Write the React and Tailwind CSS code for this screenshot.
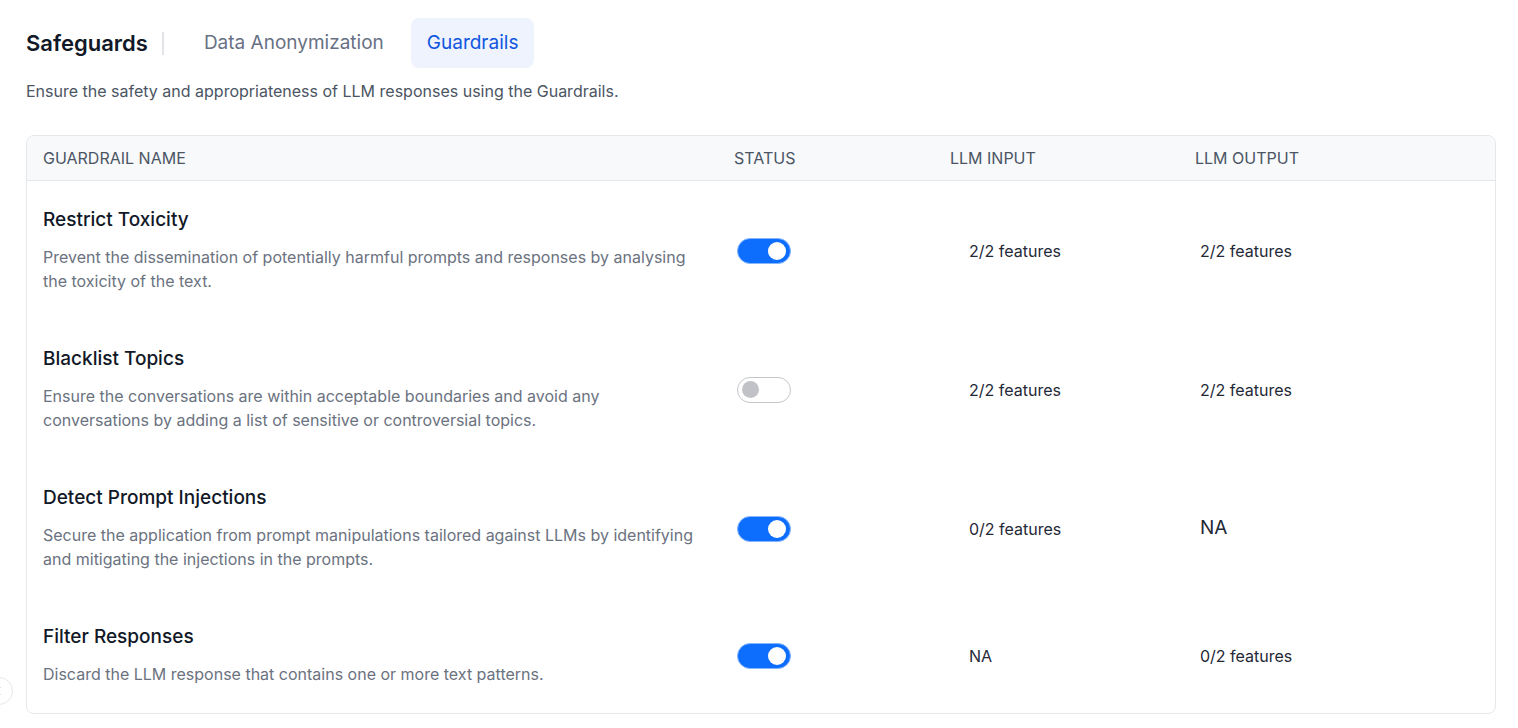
import React, { useState } from 'react';

const guardrails = [
  {
    id: 1,
    name: 'Restrict Toxicity',
    description:
      'Prevent the dissemination of potentially harmful prompts and responses by analysing the toxicity of the text.',
    enabled: true,
    input: '2/2 features',
    output: '2/2 features',
  },
  {
    id: 2,
    name: 'Blacklist Topics',
    description:
      'Ensure the conversations are within acceptable boundaries and avoid any conversations by adding a list of sensitive or controversial topics.',
    enabled: false,
    input: '2/2 features',
    output: '2/2 features',
  },
  {
    id: 3,
    name: 'Detect Prompt Injections',
    description:
      'Secure the application from prompt manipulations tailored against LLMs by identifying and mitigating the injections in the prompts.',
    enabled: true,
    input: '0/2 features',
    output: 'NA',
  },
  {
    id: 4,
    name: 'Filter Responses',
    description: 'Discard the LLM response that contains one or more text patterns.',
    enabled: true,
    input: 'NA',
    output: '0/2 features',
  },
];

function Toggle({ checked, onChange }) {
  return (
    <button
      type="button"
      onClick={onChange}
      className={
        checked
          ? 'flex h-[26px] w-[54px] items-center justify-end rounded-full border border-[#86b7fe] bg-[#0d6efd] px-[4px]'
          : 'flex h-[26px] w-[54px] items-center justify-start rounded-full border border-[#c4c6cb] bg-white px-[4px]'
      }
    >
      {checked ? (
        <span className="h-[18px] w-[18px] rounded-full bg-white" />
      ) : (
        <span className="h-[17px] w-[17px] rounded-full bg-[#c0c2c7]" />
      )}
    </button>
  );
}

function Cell({ value, big }) {
  return (
    <span className={big ? 'text-[19px] text-[#1f2937]' : 'text-[16px] text-[#1f2937]'}>
      {value}
    </span>
  );
}

export default function App() {
  const [rows, setRows] = useState(guardrails);

  const handleToggle = (id) => {
    setRows(prev => prev.map(r => (r.id === id ? { ...r, enabled: !r.enabled } : r)));
  };

  return (
    <div className="relative min-h-[728px] bg-white font-['Inter','Liberation_Sans',sans-serif]">
      <div className="pl-[26px] pr-[22px] pt-[17px]">
        {/* tabs */}
        <div className="flex items-center">
          <h1 className="text-[22px] font-semibold text-[#111827]">Safeguards</h1>
          <div className="ml-[14px] h-[23px] w-[2px] bg-[#e2e4e8]" />
          <button className="ml-[25px] px-[15px] py-[12px] text-[19px] text-[#687184]">Data Anonymization</button>
          <button className="ml-[12px] h-[50px] rounded-lg bg-[#eef3fe] px-[16px] text-[19px] text-[#0f56e0]">
            Guardrails
          </button>
        </div>

        <p className="mt-[9px] text-[16px] text-[#4b5563]">
          Ensure the safety and appropriateness of LLM responses using the Guardrails.
        </p>

        {/* table */}
        <div className="mt-[32px] overflow-hidden rounded-lg border border-[#e5e7eb]">
          <div className="grid h-[45px] grid-cols-[691px_216px_245px_1fr] items-center border-b border-[#e5e7eb] bg-[#f8f9fb] text-[16px] uppercase text-[#4b5563]">
            <div className="px-4">Guardrail Name</div>
            <div className="px-4">Status</div>
            <div className="px-4">LLM Input</div>
            <div className="px-4">LLM Output</div>
          </div>

          {rows.map(row => (
            <div key={row.id} className="grid grid-cols-[691px_216px_245px_1fr] items-center pb-[27px] pt-[25px]">
              <div className="px-4">
                <div className="text-[19px] font-medium leading-[28px] text-[#111827]">{row.name}</div>
                <p className="mt-[11px] text-[16px] leading-[24px] text-[#6b7280]">{row.description}</p>
              </div>
              <div className="px-4 pl-[19px] pt-[3px]">
                <Toggle checked={row.enabled} onChange={() => handleToggle(row.id)} />
              </div>
              <div className="pl-[35px] pt-[3px]">
                <Cell value={row.input} />
              </div>
              <div className="pl-[21px] pt-[3px]">
                <Cell value={row.output} big={row.output === 'NA'} />
              </div>
            </div>
          ))}
        </div>
      </div>

      {/* collapse handle */}
      <button className="absolute left-[-15px] top-[677px] flex h-[28px] w-[28px] items-center justify-end rounded-full border border-[#e5e7eb] bg-white pr-[10px] text-[#6b7280]">
        <svg width="8" height="10" viewBox="0 0 8 10" fill="none" stroke="currentColor" strokeWidth="1.4">
          <path d="M6 1 L2 5 L6 9" />
        </svg>
      </button>
    </div>
  );
}
